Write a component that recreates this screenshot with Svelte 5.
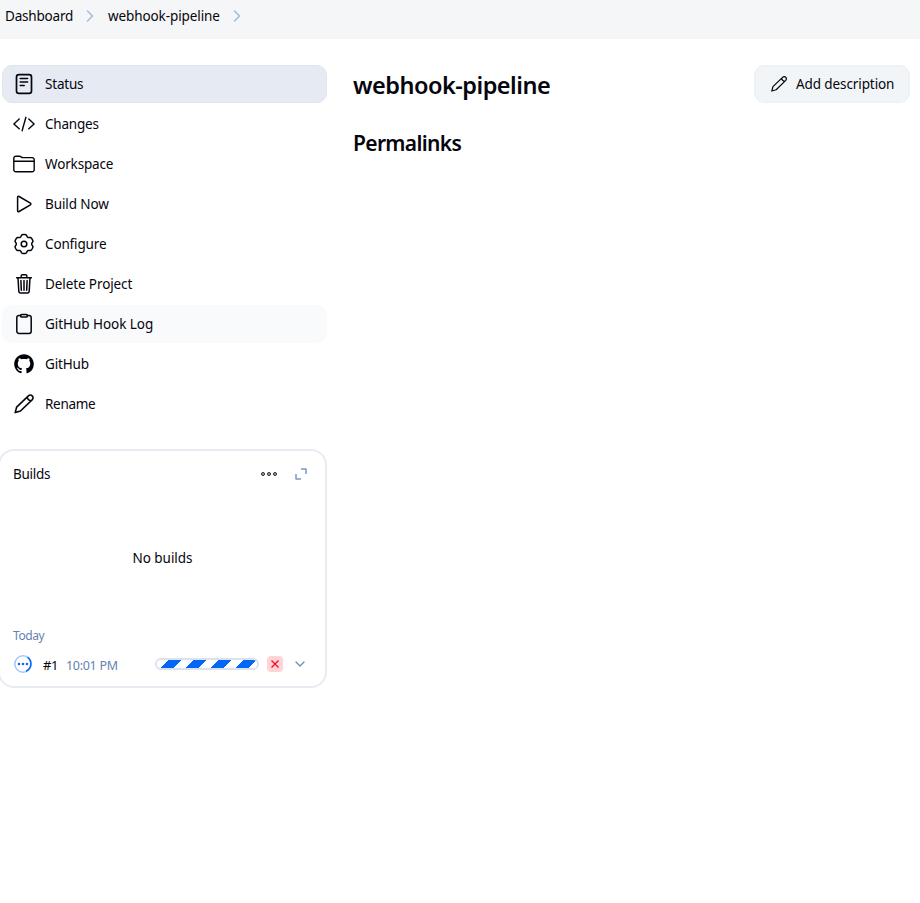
<script>
  const items = [
    { id: 'status', label: 'Status', active: true, ls: -0.2 },
    { id: 'changes', label: 'Changes', ls: -0.2 },
    { id: 'folder', label: 'Workspace', ls: -0.15 },
    { id: 'play', label: 'Build Now', ls: -0.1 },
    { id: 'gear', label: 'Configure', ls: -0.15 },
    { id: 'trash', label: 'Delete Project', ls: -0.1 },
    { id: 'clipboard', label: 'GitHub Hook Log', hover: true, ls: -0.05 },
    { id: 'github', label: 'GitHub', ls: -0.15 },
    { id: 'pencil', label: 'Rename', ls: -0.3 }
  ];

  // six-lobed cog outline
  let gear = '';
  for (let i = 0; i < 120; i++) {
    const t = (i / 120) * Math.PI * 2;
    const c = Math.cos(6 * (t - Math.PI / 2));
    const r = 8.5 + 0.95 * Math.tanh(2 * c + 0.9);
    gear += (i ? 'L' : 'M') + (11 + r * Math.cos(t)).toFixed(2) + ' ' + (11 + r * Math.sin(t)).toFixed(2);
  }
  gear += 'Z';
</script>

{#snippet pencil(size, w)}
  <svg width={size} height={size} viewBox="0 0 22 22" fill="none" stroke="currentColor" stroke-width={w} stroke-linejoin="round" stroke-linecap="round">
    <path d="M2.200 19.600l1.400-5.400L15.400 2.900a2.600 2.600 0 0 1 3.900 3.700L7.500 18zM14.300 4c.2 2.100 1.600 3.500 3.900 3.700" />
  </svg>
{/snippet}

<div class="page">
  <nav class="crumbs">
    <span class="c1">Dashboard</span>
    <svg width="8" height="12" viewBox="0 0 8 12"><path d="M1.500 1l5 5-5 5" /></svg>
    <span class="c2">webhook-pipeline</span>
    <svg width="8" height="12" viewBox="0 0 8 12"><path d="M1.500 1l5 5-5 5" /></svg>
  </nav>
  <div class="body">
    <aside>
      <div class="tasks">
        {#each items as it}
          <div class="task" class:active={it.active} class:hover={it.hover}>
            {#if it.id === 'pencil'}
              {@render pencil(22, 1.6)}
            {:else if it.id === 'github'}
              <svg width="22" height="22" viewBox="0 0 22 22"><path fill="#000008" transform="translate(1.200 1.200) scale(1.225)" d="M8 0C3.580 0 0 3.580 0 8c0 3.540 2.290 6.530 5.470 7.590.4.070.55-.17.55-.38 0-.19-.01-.82-.01-1.490-2.010.370-2.530-.49-2.690-.94-.09-.23-.48-.94-.82-1.130-.28-.15-.68-.52-.01-.53.630-.01 1.080.580 1.230.820.720 1.210 1.870.870 2.330.660.070-.52.280-.87.510-1.070-1.780-.2-3.640-.89-3.640-3.950 0-.87.310-1.590.820-2.150-.08-.2-.36-1.020.080-2.120 0 0 .670-.21 2.200.820.640-.18 1.320-.27 2-.27s1.360.09 2 .27c1.530-1.040 2.200-.82 2.200-.82.440 1.100.160 1.920.080 2.120.510.560.820 1.270.820 2.150 0 3.070-1.870 3.750-3.650 3.950.290.250.540.730.540 1.480 0 1.070-.01 1.930-.01 2.200 0 .210.150.460.550.380A8.010 8.010 0 0 0 16 8c0-4.420-3.580-8-8-8z" /></svg>
            {:else}
              <svg width="22" height="22" viewBox="0 0 22 22" fill="none" stroke="currentColor" stroke-width="1.5" stroke-linecap="round" stroke-linejoin="round">
                {#if it.id === 'status'}
                  <rect x="3.500" y="1.700" width="15" height="18.600" rx="2.400" stroke-width="1.700" /><path d="M7.200 5.600h7.400M7.200 9h7.400M7.200 12.400h4" />
                {:else if it.id === 'changes'}
                  <path d="M6.200 5.900L.9 10.900l5.300 4.900M15.800 5.900l5.300 5-5.300 4.900M12.900 4.300L9.100 17.700" stroke-width="1.400" />
                {:else if it.id === 'folder'}
                  <path d="M19 18.800H3A2.100 2.100 0 0 1 .8 16.700V5.300A2.100 2.100 0 0 1 3 3.200h3.400c1.600 0 1.800 1.400 3.400 1.400H19a2.100 2.100 0 0 1 2.200 2.100v10a2.100 2.100 0 0 1-2.200 2.100zM.8 8.300h20.400" stroke-width="1.400" />
                {:else if it.id === 'play'}
                  <path d="M4.600 4.300v13.400c0 .8.8 1.200 1.500.8l11.300-6.700c.6-.4.6-1.200 0-1.600L6.100 3.500c-.7-.4-1.500 0-1.500.8z" />
                {:else if it.id === 'gear'}
                  <path d={gear} /><circle cx="11" cy="11" r="2.800" />
                {:else if it.id === 'trash'}
                  <path d="M5 4.700l.8 13.700c.1 1.100.8 1.700 1.700 1.700h7c1 0 1.600-.6 1.700-1.700L17 4.700M3.600 4.700h14.800M8.200 4.500V2.800c0-.6.4-1 1-1h3.600c.6 0 1 .4 1 1v1.700M11 7.500v9.700M7.900 7.500l.4 9.700M14.100 7.500l-.4 9.700" />
                {:else}
                  <path d="M7.600 2.600H6a2.200 2.200 0 0 0-2.200 2.200v13.400A2.200 2.200 0 0 0 6 20.400h10a2.200 2.200 0 0 0 2.200-2.200V4.800A2.200 2.200 0 0 0 16 2.600h-1.600" /><rect x="7.600" y="1.500" width="6.800" height="2.600" rx="1.200" />
                {/if}
              </svg>
            {/if}
            <span style:letter-spacing="{it.ls}px">{it.label}</span>
          </div>
        {/each}
      </div>
      <section class="builds">
        <header>
          <span class="title">Builds</span>
          <svg class="dots" width="18" height="6" viewBox="0 0 18 6" fill="#bbb" stroke="#22222c" stroke-width="1"><circle cx="3" cy="3" r="1.500" /><circle cx="9" cy="3" r="1.500" /><circle cx="15" cy="3" r="1.500" /></svg>
          <svg width="12" height="12" viewBox="0 0 12 12" fill="none" stroke="#7d98c1" stroke-width="1.500" stroke-linejoin="round"><path d="M6 1H11v5M1 6v5h5" /></svg>
        </header>
        <div class="empty">No builds</div>
        <div class="today">Today</div>
        <div class="run">
          <svg width="20" height="20" viewBox="0 0 20 20" fill="none"><circle cx="10" cy="10" r="8.200" stroke="#a5c9fd" stroke-width="1.600" /><path d="M14.500 3.200a8.200 8.200 0 0 1-1.500 14.100" stroke="#0b6bf5" stroke-width="1.600" /><g fill="#0b6bf5"><circle cx="6" cy="10" r="1.300" /><circle cx="10" cy="10" r="1.300" /><circle cx="14" cy="10" r="1.300" /></g></svg>
          <span class="num">#1</span>
          <span class="time">10:01 PM</span>
          <div class="bar"><div class="fill"></div></div>
          <div class="stop"><svg width="8" height="8" viewBox="0 0 8 8"><path d="M.5.5l7 7M7.500.5l-7 7" stroke="#fa0a1e" stroke-width="1.300" /></svg></div>
          <svg class="chev" width="10" height="6" viewBox="0 0 10 6" fill="none"><path d="M1 1l4 4 4-4" stroke="#7290b8" stroke-width="1.400" stroke-linecap="round" /></svg>
        </div>
      </section>
    </aside>
    <main>
      <div class="head">
        <h1>webhook-pipeline</h1>
        <button>{@render pencil(18, 1.5)}<span>Add description</span></button>
      </div>
      <h2>Permalinks</h2>
    </main>
  </div>
</div>

<style>
  :global(body) { background: #fff; }
  .page { width: 920px; height: 903px; overflow: hidden; font: 13.500px/20px "Noto Sans", "Open Sans", sans-serif; color: #05050d; white-space: nowrap; }
  .crumbs { box-sizing: border-box; height: 39px; background: #f5f6f8; display: flex; align-items: center; padding: 0 0 7px 5px; }
  .crumbs svg { fill: none; stroke: #a5bbdc; stroke-width: 1.500; stroke-linecap: round; }
  .c1 { width: 81px; letter-spacing: -.2px; }
  .c2 { width: 111px; margin: 0 14px; letter-spacing: -.1px; }
  .body { display: flex; padding-top: 26px; }
  aside { width: 327px; }
  .tasks { display: flex; flex-direction: column; gap: 2px; padding-left: 2px; }
  .task { box-sizing: border-box; height: 38px; border-radius: 10px; display: flex; align-items: center; gap: 10px; padding-left: 11px; }
  .active { background: #e6eaf2; border: 1px solid #dfe5ee; padding-left: 10px; }
  .hover { background: #f9fafb; }
  .builds { box-sizing: border-box; width: 329px; height: 239px; margin: 26px 0 0 -2px; border: 2px solid #e7ebf2; border-radius: 16px; padding: 13px 18px 0 13px; }
  header { display: flex; align-items: center; height: 20px; }
  .title { flex: 1; letter-spacing: -.3px; }
  .dots { margin-right: 17px; }
  .empty { text-align: center; margin: 64px -5px 0 0; letter-spacing: -.05px; }
  .today { margin-top: 58px; font-size: 12px; color: #6482ae; letter-spacing: -.4px; }
  .run { display: flex; align-items: center; height: 20px; margin-top: 8px; }
  .run > svg:first-child { width: 20px; margin: 0 10px 0 0; flex: none; }
  .num { width: 23px; font-size: 13px; padding-top: 2px; letter-spacing: -.3px; }
  .time { width: 89px; font-size: 12.500px; color: #6482ae; padding-top: 3px; letter-spacing: -.3px; }
  .bar { box-sizing: border-box; width: 104px; height: 12px; border: 2px solid #d9e2ed; border-radius: 6px; overflow: hidden; background: #fff; }
  .fill { height: 8px; margin-left: -1px; background: repeating-linear-gradient(135deg, #fff 0 8.840px, #0366f7 8.840px 17.680px); }
  .stop { width: 16px; height: 16px; margin: 0 12px 0 8px; border-radius: 4px; background: #ffd4d7; display: flex; align-items: center; justify-content: center; }
  main { flex: 1; padding: 0 10px 0 26px; }
  .head { display: flex; justify-content: space-between; height: 38px; align-items: center; }
  h1 { margin: 2px 0 0; font-size: 23.500px; line-height: 32px; font-weight: 600; letter-spacing: -.5px; }
  h2 { margin: 26px 0 0; font-size: 21px; line-height: 28px; font-weight: 600; letter-spacing: -.65px; }
  button { box-sizing: border-box; width: 156px; height: 38px; border: 2px solid #edf2f6; border-radius: 10px; background: #f2f5f8; display: flex; align-items: center; gap: 8px; padding: 0 0 0 14px; font: inherit; color: inherit; letter-spacing: -.1px; }
</style>
